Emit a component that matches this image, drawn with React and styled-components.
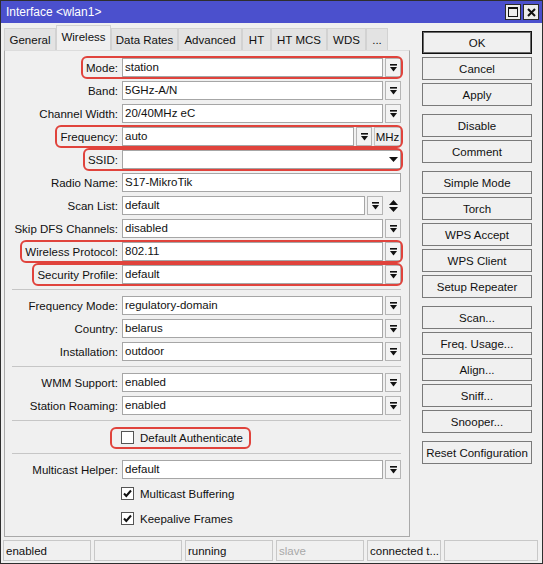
import styled, { createGlobalStyle } from 'styled-components';

const GlobalStyle = createGlobalStyle`
  html, body {
    margin: 0;
    padding: 0;
    background: #f0f0f0;
  }
  body {
    font-family: "Liberation Sans", Arial, sans-serif;
    font-size: 11.5px;
    color: #111;
  }
`;

const RED = '#e0433c';

const Window = styled.div`
  width: 543px;
  height: 564px;
  box-sizing: border-box;
  border: 1px solid #2e2e2e;
  background: #f0f0f0;
  display: flex;
  flex-direction: column;
`;

const TitleBar = styled.div`
  height: 22px;
  flex: none;
  background: #4b50cd;
  display: flex;
  align-items: center;
  justify-content: space-between;
  padding: 0 3px 0 5px;
`;

const Title = styled.div`
  color: #fff;
  font-size: 12px;
`;

const TitleButtons = styled.div`
  display: flex;
  gap: 2px;
`;

const TitleButton = styled.div`
  width: 16px;
  height: 16px;
  box-sizing: border-box;
  border: 1px solid #2a2a2a;
  background: #ececec;
  display: flex;
  align-items: center;
  justify-content: center;
`;

const Body = styled.div`
  flex: 1;
  display: flex;
  padding: 2px 0 2px 3px;
  min-height: 0;
`;

const Main = styled.div`
  width: 406px;
  display: flex;
  flex-direction: column;
`;

const Tabs = styled.div`
  height: 25px;
  display: flex;
  align-items: flex-end;
`;

const Tab = styled.div`
  width: ${({ w }) => w}px;
  height: ${({ active }) => (active ? 25 : 22)}px;
  box-sizing: border-box;
  border: 1px solid #d2d2d2;
  border-bottom: none;
  background: ${({ active }) => (active ? '#f0f0f0' : '#e3e3e3')};
  display: flex;
  align-items: center;
  justify-content: center;
  padding-bottom: ${({ active }) => (active ? 3 : 0)}px;
  white-space: nowrap;
`;

const Panel = styled.div`
  flex: 1;
  border: 1px solid #a9a9a9;
  border-top-color: #dcdcdc;
  padding: 5px 8px 0 7px;
  display: flex;
  flex-direction: column;
`;

const Row = styled.div`
  height: 23px;
  display: flex;
  justify-content: flex-end;
  align-items: center;
`;

const Mark = styled.div`
  display: flex;
  align-items: center;
  padding-left: 3px;
  border-radius: 4px;
  outline: ${({ on }) => (on ? `2px solid ${RED}` : 'none')};
`;

const Label = styled.span`
  margin-right: 4px;
  white-space: nowrap;
`;

const Controls = styled.div`
  width: 279px;
  height: 19px;
  display: flex;
  gap: 2px;
`;

const Input = styled.div`
  flex: 1;
  box-sizing: border-box;
  height: 19px;
  border: 1px solid #a6a6a6;
  background: #fff;
  padding: 0 2px;
  line-height: 17px;
  white-space: nowrap;
  overflow: hidden;
  display: flex;
  align-items: center;
  justify-content: space-between;
`;

const DropButton = styled.div`
  width: 16px;
  flex: none;
  box-sizing: border-box;
  border: 1px solid #b5b5b5;
  background: #f3f3f3;
  display: flex;
  align-items: center;
  justify-content: center;
`;

const Unit = styled.div`
  width: 27px;
  flex: none;
  box-sizing: border-box;
  border: 1px solid #c4c4c4;
  display: flex;
  align-items: center;
  justify-content: center;
`;

const Spinner = styled.div`
  width: 16px;
  flex: none;
  display: flex;
  align-items: center;
  justify-content: center;
`;

const Separator = styled.div`
  height: 1px;
  background: #c6c6c6;
  margin: 3px 0 4px;
  flex: none;
`;

const CheckRow = styled.div`
  height: 25px;
  display: flex;
  align-items: center;
  padding-left: 109px;
`;

const CheckMark = styled.div`
  display: flex;
  align-items: center;
  height: 18px;
  margin-left: ${({ on }) => (on ? -9 : 0)}px;
  padding: ${({ on }) => (on ? '0 6px 0 9px' : 0)};
  border-radius: 4px;
  outline: ${({ on }) => (on ? `2px solid ${RED}` : 'none')};
`;

const Box = styled.div`
  width: 13px;
  height: 13px;
  box-sizing: border-box;
  border: 1px solid #555;
  background: #fff;
  margin-right: 6px;
  display: flex;
  align-items: center;
  justify-content: center;
`;

const Side = styled.div`
  width: 110px;
  margin-left: 12px;
  padding-top: 6px;
  display: flex;
  flex-direction: column;
  gap: 8px;
`;

const Group = styled.div`
  display: flex;
  flex-direction: column;
  gap: 3px;
`;

const Button = styled.div`
  height: 23px;
  box-sizing: border-box;
  border: 1px solid ${({ primary }) => (primary ? '#111' : '#7a7a7a')};
  box-shadow: ${({ primary }) => (primary ? 'inset 0 0 0 1px #6a6a6a' : 'none')};
  background: #f0f0f0;
  display: flex;
  align-items: center;
  justify-content: center;
  white-space: nowrap;
`;

const StatusBar = styled.div`
  height: 24px;
  flex: none;
  display: flex;
  gap: 3px;
  padding: 1px 0 2px 2px;
  box-sizing: border-box;
`;

const StatusCell = styled.div`
  width: ${({ w }) => w}px;
  box-sizing: border-box;
  border: 1px solid #c8c8c8;
  padding-left: 2px;
  display: flex;
  align-items: center;
  white-space: nowrap;
  color: ${({ dim }) => (dim ? '#a8a8a8' : '#111')};
`;

const DropIcon = () => (
  <svg width="7" height="8" viewBox="0 0 7 8">
    <rect x="0" y="0" width="7" height="1.6" fill="#111" />
    <path d="M0 3h7L3.5 7.5z" fill="#111" />
  </svg>
);

const ComboIcon = () => (
  <svg width="9" height="5" viewBox="0 0 9 5">
    <path d="M0 0h9L4.5 5z" fill="#111" />
  </svg>
);

const UpDownIcon = () => (
  <svg width="9" height="12" viewBox="0 0 9 12">
    <path d="M0 5h9L4.5 0z" fill="#111" />
    <path d="M0 7h9L4.5 12z" fill="#111" />
  </svg>
);

const Tick = () => (
  <svg width="9" height="9" viewBox="0 0 9 9">
    <path d="M1 4.5l2.3 2.5L8 1.5" stroke="#111" strokeWidth="2" fill="none" />
  </svg>
);

const tabs = [
  { name: 'General', w: 52 },
  { name: 'Wireless', w: 55, active: true },
  { name: 'Data Rates', w: 67 },
  { name: 'Advanced', w: 64 },
  { name: 'HT', w: 29 },
  { name: 'HT MCS', w: 56 },
  { name: 'WDS', w: 39 },
  { name: '...', w: 22 },
];

const sections = [
  [
    { label: 'Mode', value: 'station', mark: true },
    { label: 'Band', value: '5GHz-A/N' },
    { label: 'Channel Width', value: '20/40MHz eC' },
    { label: 'Frequency', value: 'auto', mark: true, unit: 'MHz' },
    { label: 'SSID', value: '', mark: true, kind: 'combo' },
    { label: 'Radio Name', value: 'S17-MikroTik', kind: 'text' },
    { label: 'Scan List', value: 'default', kind: 'scan' },
    { label: 'Skip DFS Channels', value: 'disabled' },
    { label: 'Wireless Protocol', value: '802.11', mark: true },
    { label: 'Security Profile', value: 'default', mark: true },
  ],
  [
    { label: 'Frequency Mode', value: 'regulatory-domain' },
    { label: 'Country', value: 'belarus' },
    { label: 'Installation', value: 'outdoor' },
  ],
  [
    { label: 'WMM Support', value: 'enabled' },
    { label: 'Station Roaming', value: 'enabled' },
  ],
];

const buttonGroups = [
  ['OK', 'Cancel', 'Apply'],
  ['Disable', 'Comment'],
  ['Simple Mode', 'Torch', 'WPS Accept', 'WPS Client', 'Setup Repeater'],
  ['Scan...', 'Freq. Usage...', 'Align...', 'Sniff...', 'Snooper...'],
  ['Reset Configuration'],
];

const status = [
  { text: 'enabled', w: 88 },
  { text: '', w: 88 },
  { text: 'running', w: 88 },
  { text: 'slave', w: 88, dim: true },
  { text: 'connected t...', w: 74 },
  { text: '', w: 94 },
];

function FieldControls({ field }) {
  if (field.kind === 'text') {
    return (
      <Controls>
        <Input>{field.value}</Input>
      </Controls>
    );
  }
  if (field.kind === 'combo') {
    return (
      <Controls>
        <Input>
          <span>{field.value}</span>
          <ComboIcon />
        </Input>
      </Controls>
    );
  }
  return (
    <Controls>
      <Input>{field.value}</Input>
      <DropButton>
        <DropIcon />
      </DropButton>
      {field.unit && <Unit>{field.unit}</Unit>}
      {field.kind === 'scan' && (
        <Spinner>
          <UpDownIcon />
        </Spinner>
      )}
    </Controls>
  );
}

function FieldRow({ field }) {
  return (
    <Row>
      <Mark on={field.mark}>
        <Label>{field.label}:</Label>
        <FieldControls field={field} />
      </Mark>
    </Row>
  );
}

function Check({ label, checked, mark }) {
  return (
    <CheckRow>
      <CheckMark on={mark}>
        <Box>{checked && <Tick />}</Box>
        {label}
      </CheckMark>
    </CheckRow>
  );
}

export default function App() {
  return (
    <>
      <GlobalStyle />
      <Window>
        <TitleBar>
          <Title>Interface &lt;wlan1&gt;</Title>
          <TitleButtons>
            <TitleButton>
              <svg width="10" height="10" viewBox="0 0 10 10">
                <rect x="0.5" y="0.5" width="9" height="9" fill="none" stroke="#111" />
                <rect x="0" y="0" width="10" height="2" fill="#111" />
              </svg>
            </TitleButton>
            <TitleButton>
              <svg width="9" height="9" viewBox="0 0 9 9">
                <path d="M1 1l7 7M8 1l-7 7" stroke="#111" strokeWidth="2" />
              </svg>
            </TitleButton>
          </TitleButtons>
        </TitleBar>
        <Body>
          <Main>
            <Tabs>
              {tabs.map((t) => (
                <Tab key={t.name} w={t.w} active={t.active}>
                  {t.name}
                </Tab>
              ))}
            </Tabs>
            <Panel>
              {sections.map((rows, i) => (
                <div key={i}>
                  {rows.map((f) => (
                    <FieldRow key={f.label} field={f} />
                  ))}
                  <Separator />
                </div>
              ))}
              <Check label="Default Authenticate" mark />
              <Separator />
              <FieldRow field={{ label: 'Multicast Helper', value: 'default' }} />
              <Check label="Multicast Buffering" checked />
              <Check label="Keepalive Frames" checked />
            </Panel>
          </Main>
          <Side>
            {buttonGroups.map((g, i) => (
              <Group key={i}>
                {g.map((b) => (
                  <Button key={b} primary={b === 'OK'}>
                    {b}
                  </Button>
                ))}
              </Group>
            ))}
          </Side>
        </Body>
        <StatusBar>
          {status.map((s, i) => (
            <StatusCell key={i} w={s.w} dim={s.dim}>
              {s.text}
            </StatusCell>
          ))}
        </StatusBar>
      </Window>
    </>
  );
}
